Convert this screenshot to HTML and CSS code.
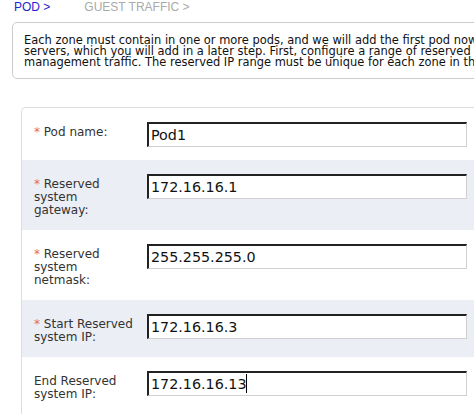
FILE: index.html
```html
<!DOCTYPE html>
<html>
<head>
<meta charset="utf-8">
<link rel="stylesheet" href="styles.css">
</head>
<body>
<div class="page">
  <div class="crumbs">
    <span class="crumb active">POD &gt;</span>
    <span class="crumb">GUEST TRAFFIC &gt;</span>
  </div>
  <div class="desc">Each zone must contain in one or more pods, and we will add the first pod now. A pod contains hosts and primary storage<br>servers, which you will add in a later step. First, configure a range of reserved IP addresses for CloudStack's internal<br>management traffic. The reserved IP range must be unique for each zone in the cloud.</div>
  <div class="panel">
    <div class="row">
      <label class="lbl"><span class="req">*</span> Pod name:</label>
      <input class="field" type="text" value="Pod1">
    </div>
    <div class="row alt">
      <label class="lbl"><span class="req">*</span> Reserved system gateway:</label>
      <input class="field" type="text" value="172.16.16.1">
    </div>
    <div class="row">
      <label class="lbl"><span class="req">*</span> Reserved system netmask:</label>
      <input class="field" type="text" value="255.255.255.0">
    </div>
    <div class="row alt">
      <label class="lbl"><span class="req">*</span> Start Reserved system IP:</label>
      <input class="field" type="text" value="172.16.16.3">
    </div>
    <div class="row">
      <label class="lbl">End Reserved system IP:</label>
      <div class="fieldwrap">
        <input class="field" type="text" value="172.16.16.13">
        <span class="caret"></span>
      </div>
    </div>
  </div>
</div>
</body>
</html>
```
FILE: styles.css
```css
html, body {
  margin: 0;
  padding: 0;
  overflow: hidden;
  background: #fff;
}
.page {
  width: 1000px;
  font-family: "DejaVu Sans", sans-serif;
}
.crumbs {
  height: 16px;
  padding-left: 14px;
  display: flex;
  gap: 34px;
  font-family: "Liberation Sans", Arial, sans-serif;
  font-size: 12px;
  line-height: 15px;
  color: #aaaaaa;
}
.crumb.active {
  color: #2424cc;
}
.desc {
  margin: 6px 0 0 12px;
  border: 1px solid #cccccc;
  border-radius: 5px;
  padding: 12px 0 10px 11px;
  font-size: 11.45px;
  line-height: 10.8px;
  color: #111;
  white-space: nowrap;
  height: 33px;
}
.panel {
  margin: 28px 0 0 21px;
  border-left: 1px solid #dddddd;
  border-top: 1px solid #dddddd;
  border-top-left-radius: 5px;
}
.row {
  display: flex;
  align-items: flex-start;
  padding: 14px 0 13px 12px;
}
.row.alt {
  background: #eceef5;
}
.lbl {
  width: 100px;
  margin-right: 13px;
  margin-top: 4px;
  font-size: 12px;
  line-height: 13px;
  color: #333;
}
.req {
  color: #e06a6a;
}
.fieldwrap {
  position: relative;
  display: flex;
}
.field {
  box-sizing: border-box;
  width: 320px;
  height: 25px;
  margin: 0;
  padding: 0 2px;
  border-top: 2px solid #222;
  border-left: 2px solid #222;
  border-right: 1px solid #d0d0d0;
  border-bottom: 1px solid #d0d0d0;
  background: #fff;
  font-family: "DejaVu Sans", sans-serif;
  font-size: 14.3px;
  color: #111;
  outline: none;
}
.caret {
  position: absolute;
  left: 99px;
  top: 3px;
  width: 1px;
  height: 19px;
  background: #000;
}
```
